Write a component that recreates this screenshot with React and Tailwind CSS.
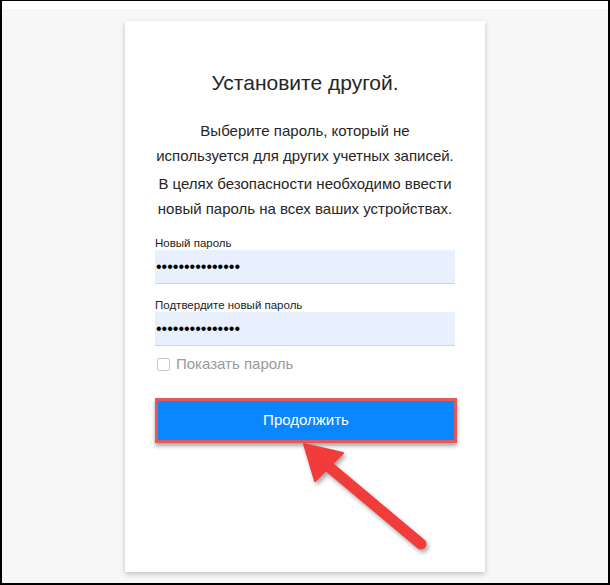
import React from "react";

const dots = "•••••••••••••••";

function Field({ label, className = "" }) {
  return (
    <div className={className}>
      <div className="text-[11.5px] leading-[14px] text-[#222]">{label}</div>
      <div className="h-[34px] bg-[#e8f0fe] border-b border-[#d0d4da] flex items-center pl-[1px]">
        <span className="text-[16px] leading-none text-black">{dots}</span>
      </div>
    </div>
  );
}

function Arrow() {
  return (
    <svg
      className="absolute left-0 top-0 pointer-events-none drop-shadow-[2px_3px_2px_rgba(0,0,0,0.35)]"
      width="610"
      height="585"
      viewBox="0 0 610 585"
    >
      <line x1="326" y1="465" x2="419" y2="543" stroke="#f23c3c" strokeWidth="11" strokeLinecap="round" />
      <polygon points="302,443 313,480 341,452" fill="#f23c3c" stroke="#f23c3c" strokeWidth="2" strokeLinejoin="round" />
    </svg>
  );
}

export default function App() {
  return (
    <div className="relative w-[610px] h-[585px] border-t border-l-2 border-r-2 border-b-2 border-black bg-white flex flex-col font-['Liberation_Sans',Arial,sans-serif]">
      <div className="h-[8px] bg-white" />
      <div className="flex-1 bg-[#f7f7f7]">
        <div className="ml-[123px] mt-[12px] w-[360px] h-[551px] bg-white shadow-[0_2px_5px_rgba(0,0,0,0.22)] px-[30px] pt-[48px] text-center">
          <h1 className="text-[21px] leading-[28px] text-[#262626]">Установите другой.</h1>
          <p className="mt-[21px] text-[15px] leading-[25px] text-[#262626]">
            Выберите пароль, который не
            <br />
            используется для других учетных записей.
          </p>
          <p className="mt-[3px] text-[15px] leading-[25px] text-[#262626]">
            В целях безопасности необходимо ввести
            <br />
            новый пароль на всех ваших устройствах.
          </p>
          <div className="text-left">
            <Field label="Новый пароль" className="mt-[15px]" />
            <Field label="Подтвердите новый пароль" className="mt-[14px]" />
            <label className="mt-[8px] h-[20px] flex items-center gap-[6px] pl-[2px]">
              <span className="w-[13px] h-[13px] border border-[#c8c8c8] rounded-[2px] bg-white" />
              <span className="text-[15px] text-[#9a9a9a]">Показать пароль</span>
            </label>
          </div>
          <button className="mt-[24px] w-[302px] h-[45px] border-[3px] border-[#e3585a] bg-[#0a86ff] text-white text-[15px] shadow-[0_3px_4px_rgba(0,0,0,0.35)] flex items-center justify-center">
            Продолжить
          </button>
        </div>
      </div>
      <Arrow />
    </div>
  );
}
